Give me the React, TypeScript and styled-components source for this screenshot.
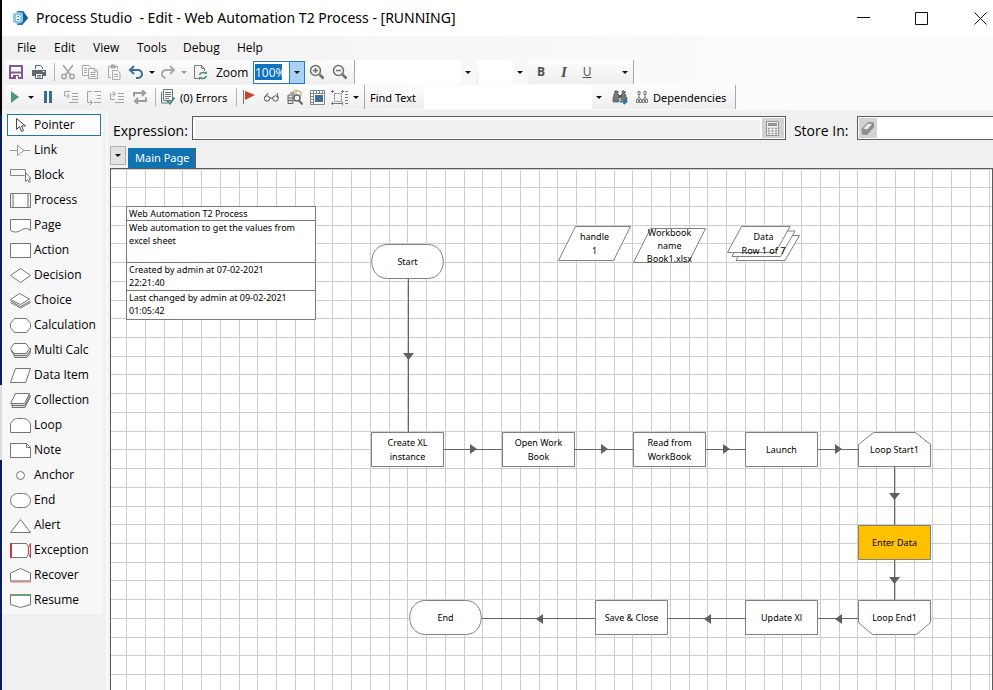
import React from "react";
import styled, { createGlobalStyle } from "styled-components";

const GlobalStyle = createGlobalStyle`
  * { box-sizing: border-box; }
  body { margin: 0; background: #f0f0f0; overflow: hidden; }
  body, button, input, select {
    font-family: "Open Sans", "Noto Sans", sans-serif;
    font-size: 12px;
    color: #000;
  }
  button { border: 0; padding: 0; margin: 0; background: none; }
  svg { display: block; flex: none; }
`;

const INK = "#6a6a6a";

/* ---------- frame ---------- */

const Screen = styled.div`
  display: flex;
  height: 100vh;
`;

const DesktopEdge = styled.div`
  flex: none;
  width: 2px;
  background: linear-gradient(
    #05060c 0 115px,
    #0b1c5c 115px 385px,
    #dcdcdc 385px 460px,
    #0b1c5c 460px
  );
`;

const Window = styled.div`
  flex: 1;
  min-width: 0;
  display: flex;
  flex-direction: column;
  background: #f0f0f0;
`;

const TitleBar = styled.header`
  display: flex;
  align-items: center;
  height: 36px;
  flex: none;
  padding-left: 10px;
  background: #fff;
`;

const Title = styled.h1`
  flex: 1;
  margin: 0;
  padding-left: 7px;
  font-family: "Noto Sans", sans-serif;
  font-size: 14px;
  font-weight: 400;
  line-height: 20px;
  white-space: pre;
`;

const WindowButton = styled.button`
  display: grid;
  place-items: center;
  width: 58px;
  height: 36px;

  &:last-child { width: 60px; margin-right: -17px; }
`;

const Chrome = styled.div`
  flex: none;
  height: 74px;
  background: linear-gradient(90deg, #f0f0f0, #fcfcfc 80%);
`;

const MenuBar = styled.nav`
  display: flex;
  height: 24px;
  align-items: center;
  padding-left: 5px;
`;

const MenuItem = styled.button<{ $w: number }>`
  width: ${(p) => p.$w}px;
  text-align: left;
  padding-left: 10px;
  line-height: 20px;
`;

const ToolRow = styled.div`
  display: flex;
  height: 25px;
  padding-left: 3px;
`;

const ToolGroup = styled.div`
  display: flex;
  height: 24px;
  align-items: center;
  border-right: 1px solid #a8a8a8;
  background: linear-gradient(#fdfdfd, #eeeeee);
`;

const ToolButton = styled.button<{ $w: number }>`
  display: grid;
  place-items: center;
  width: ${(p) => p.$w}px;
  height: 24px;
`;

const WideTool = styled.button<{ $w: number }>`
  display: flex;
  align-items: center;
  gap: 5px;
  width: ${(p) => p.$w}px;
  height: 24px;
  font-family: "Noto Sans", sans-serif;
  font-size: 11px;
  white-space: nowrap;
`;

const Divider = styled.span<{ $w: number }>`
  display: grid;
  place-items: center;
  width: ${(p) => p.$w}px;

  &::before { content: ""; width: 1px; height: 18px; background: #b4b4b4; }
`;

const Gap = styled.span<{ $w: number }>`
  width: ${(p) => p.$w}px;
`;

const ToolLabel = styled.label<{ $w: number; $small?: boolean }>`
  width: ${(p) => p.$w}px;
  padding-left: 5px;
  font-family: ${(p) => (p.$small ? '"Noto Sans"' : '"Open Sans"')}, sans-serif;
  font-size: ${(p) => (p.$small ? 11 : 12)}px;
  white-space: nowrap;
`;

const ZoomCombo = styled.div`
  display: flex;
  align-items: center;
  width: 52px;
  height: 23px;
  border: 1px solid #2a7ab8;
  background: #fff;
`;

const ZoomInput = styled.input`
  width: 27px;
  height: 16px;
  margin: 0 7px 0 1px;
  padding: 0;
  border: 0;
  background: #1173c4;
  color: #fff;
`;

const ZoomDrop = styled.button`
  display: grid;
  place-items: center;
  width: 15px;
  height: 21px;
  border-left: 1px solid #2a7ab8;
  background: #a9d1f5;
`;

const SelectBox = styled.div<{ $w: number }>`
  display: grid;
  grid-template-columns: 1fr 16px;
  align-items: center;
  width: ${(p) => p.$w}px;
  height: 24px;
  background: #fff;

  select {
    grid-area: 1 / 1 / 2 / 3;
    width: 100%;
    height: 24px;
    border: 0;
    appearance: none;
    background: linear-gradient(90deg, #fff calc(100% - 15px), #f8f8f8 0);
  }
  svg { grid-area: 1 / 2; justify-self: center; pointer-events: none; }
`;

const FindInput = styled.input`
  width: 168px;
  height: 24px;
  border: 0;
  padding: 0 4px;
  background: #fff;
`;

const Letter = styled.span<{ $kind: "b" | "i" | "u" }>`
  font-family: ${(p) => (p.$kind === "i" ? '"Liberation Serif", serif' : '"Open Sans", sans-serif')};
  font-size: ${(p) => (p.$kind === "i" ? 15 : 12)}px;
  font-weight: ${(p) => (p.$kind === "u" ? 400 : 700)};
  font-style: ${(p) => (p.$kind === "i" ? "italic" : "normal")};
  text-decoration: ${(p) => (p.$kind === "u" ? "underline" : "none")};
  line-height: 18px;
  color: #505050;
`;

/* ---------- body ---------- */

const Body = styled.div`
  flex: 1;
  min-height: 0;
  display: flex;
`;

const Sidebar = styled.aside`
  flex: none;
  width: 106px;
  border-right: 2px solid #f8f8f8;
`;

const StageList = styled.div`
  display: flex;
  flex-direction: column;
  gap: 3px;
  width: 101px;
  padding: 4px 2px 3px 5px;
  background: #f7f7f7;
`;

const StageButton = styled.button<{ $active?: boolean }>`
  display: flex;
  align-items: center;
  gap: 3px;
  height: 22px;
  padding-left: 2px;
  line-height: 16px;
  border: 1px solid ${(p) => (p.$active ? "#1c7aa8" : "transparent")};
  background: ${(p) => (p.$active ? "#fdfdfd" : "none")};
  white-space: nowrap;
`;

const Main = styled.main`
  flex: 1;
  min-width: 0;
  display: flex;
  flex-direction: column;
`;

const ExpressionRow = styled.div`
  display: flex;
  align-items: center;
  flex: none;
  height: 36px;
  padding-left: 5px;
`;

const FieldLabel = styled.label<{ $w: number }>`
  flex: none;
  width: ${(p) => p.$w}px;
  padding-top: 5px;
  font-size: 14px;
  line-height: 20px;
  white-space: nowrap;
`;

const Field = styled.div<{ $grow: number; $tint?: boolean }>`
  display: flex;
  flex: ${(p) => p.$grow} 1 0;
  min-width: 0;
  height: 24px;
  padding: 1px;
  border: 1px solid #5c5c5c;
  background: #fff;

  input {
    flex: 1;
    min-width: 0;
    border: 0;
    margin: ${(p) => (p.$tint ? "2px 2px 0 1px" : "0")};
    background: ${(p) => (p.$tint ? "#f0f0f0" : "#fff")};
  }
`;

const ExpressionField = styled(Field)`
  margin-right: 8px;
`;

const StoreField = styled(Field)`
  border-right: 0;
`;

const FieldButton = styled.button<{ $w: number }>`
  display: grid;
  place-items: center;
  width: ${(p) => p.$w}px;
  height: 20px;
  background: #d2d2d2;
`;

const TabRow = styled.div`
  display: flex;
  align-items: flex-end;
  flex: none;
  gap: 2px;
  height: 22px;
  padding-left: 2px;
`;

const TabDrop = styled.button`
  display: grid;
  place-items: center;
  align-self: flex-start;
  width: 16px;
  height: 19px;
  border: 1px solid #b0b0b0;
  background: #e2e2e2;
`;

const Tab = styled.button`
  height: 20px;
  padding: 0 6px 2px 7px;
  border-right: 1px solid #5c5c5c;
  background: #0f72b2;
  font-family: "Noto Sans", sans-serif;
  font-size: 11px;
  color: #fff;
  white-space: nowrap;
`;

const Canvas = styled.div`
  position: relative;
  flex: 1;
  overflow: hidden;
  margin-left: 2px;
  border: 1px solid #5c5c5c;
  border-bottom: 0;
  background: #fff;
`;

const Diagram = styled.svg`
  width: 100%;
  height: 100%;
`;

const NodeBox = styled.div<{ $x: number; $y: number; $tight?: boolean }>`
  position: absolute;
  left: ${(p) => p.$x}px;
  top: ${(p) => p.$y}px;
  display: grid;
  place-items: center;
  width: 73px;
  height: 36px;
  font-family: "Noto Sans", sans-serif;
  font-size: 9px;
  line-height: ${(p) => (p.$tight ? 13 : 14)}px;
  text-align: center;
  white-space: pre;

  > * { grid-area: 1 / 1; }
`;

const InfoBox = styled.section`
  position: absolute;
  left: 15px;
  top: 37px;
  width: 190px;
  border: 1px solid #7a7a7a;
  background: #fff;
  font-family: "Noto Sans", sans-serif;
  font-size: 9px;
  line-height: 13px;
`;

const InfoLine = styled.p<{ $lines: number }>`
  margin: 0;
  padding: 0 10px 0 2px;
  min-height: ${(p) => p.$lines * 14}px;

  &:first-child { min-height: 13px; }
  &:last-child { min-height: 29px; }
  & + & { border-top: 1px solid #7a7a7a; }
`;

/* ---------- icons ---------- */

const Caret = ({ color = "#111" }: { color?: string }) => (
  <svg width="6" height="3" viewBox="0 0 6 3"><path d="M0 0h6L3 3z" fill={color} /></svg>
);

type IconProps = { w?: number; h?: number; color?: string; sw?: number; children: React.ReactNode };
const Icon = ({ w = 16, h = 16, color = INK, sw = 1, children }: IconProps) => (
  <svg width={w} height={h} viewBox={`0 0 ${w} ${h}`} fill="none" stroke={color} strokeWidth={sw}>
    {children}
  </svg>
);

const AppIcon = () => (
  <Icon w={17} h={16} color="none">
    <path d="M5 1h6l5 7-6 7H5z" fill="#1d7dc0" />
    <path d="M11 1l5 7-6 7z" fill="#135f9c" />
    <path d="M1 4l4-2 6 1v9l-6 2-4-2z" fill="#8cc4ea" />
    <path d="M4 5h3.500l1 1.500-1 1.500 1 1.500-1 1.500H4z" fill="#e9f5fc" />
    <path d="M5 6h2v1H5zM5 9h2v1H5z" fill="#3a8fc8" />
  </Icon>
);

const SaveIcon = () => (
  <Icon w={14} h={14} color="#80589a" sw={2}>
    <path d="M1 1h12v12H1z" fill="#fff" />
    <path d="M1 7.500h12" />
    <path d="M4 10h6v4H4z" fill="#80589a" stroke="none" />
    <path d="M7 11h2v3H7z" fill="#fff" stroke="none" />
  </Icon>
);
const PrintIcon = () => (
  <Icon w={14} h={14} color="#5f666b">
    <path d="M3.500 4V.5h5l2 2V4" />
    <path d="M0 5h14v6H0z" fill="#5f666b" stroke="none" />
    <path d="M3.500 8.500h7v5h-7z" fill="#fff" />
    <path d="M5 10.500h4M5 12h4" /><path d="M10.500 6.500h2" stroke="#fff" />
  </Icon>
);
const CutIcon = () => (
  <Icon w={16} color="#a4a4a4" sw={1.5}>
    <path d="M3 1l7.500 10M13 1L5.500 11" />
    <circle cx="4" cy="12.500" r="2.200" /><circle cx="12" cy="12.500" r="2.200" />
  </Icon>
);
const CopyIcon = () => (
  <Icon color="#a9a9a9">
    <path d="M7 11.500H.5V1.500H7L9.500 4" /><path d="M2 4.500h3M2 6.500h3M2 8.500h3" />
    <path d="M6.500 4.500h6L15.500 7v7.500h-9z" fill="#f4f4f4" /><path d="M12 4.500V7h3M8.500 8.500h5M8.500 10.500h5M8.500 12.500h5" />
  </Icon>
);
const PasteIcon = () => (
  <Icon color="#a9a9a9">
    <path d="M5 13.500H2.500v-11h9V5" /><path d="M5 1h4v3H5z" fill="#a9a9a9" />
    <path d="M6.500 6.500h5L14 9v6.500H6.500z" fill="#f4f4f4" /><path d="M8 10.500h4M8 12.500h4" />
  </Icon>
);
const UndoIcon = () => (
  <Icon color="#3c6f9f" sw={2}><path d="M6 2L2 6l4 4M2.500 6h7a4 4 0 0 1 1 8H8" /></Icon>
);
const RedoIcon = () => (
  <Icon color="#a9a9a9" sw={2}><path d="M10 2l4 4-4 4M13.500 6h-7a4 4 0 0 0-1 8" /></Icon>
);
const RefreshDocIcon = () => (
  <Icon color="#7c7c7c">
    <path d="M7 14.500H2.500V1.500h7l3 3V7M9.500 1.500v3h3" />
    <path d="M7.500 11a4 3 0 0 1 6-2M14.500 12a4 3 0 0 1-6 2" stroke="#4f9070" strokeWidth="1.500" />
    <path d="M15 7v3h-3zM7 16v-3h3z" fill="#4f9070" stroke="none" />
  </Icon>
);
const Magnifier = ({ plus }: { plus?: boolean }) => (
  <Icon color="#6e6e6e" sw={1.500}>
    <circle cx="6.500" cy="6.500" r="5" /><path d="M10.500 10.500l4 4" strokeWidth="2.500" />
    <path d={plus ? "M4 6.500h5M6.500 4v5" : "M4 6.500h5"} />
  </Icon>
);

const PlayIcon = () => <Icon w={10} h={12} color="none"><path d="M1 0v12l8-6z" fill="#4f9a78" /></Icon>;
const PauseIcon = () => <Icon w={8} h={12} color="none"><path d="M0 0h3v12H0zM5 0h3v12H5z" fill="#386e9c" /></Icon>;
const StepIcon = ({ kind }: { kind: "in" | "over" | "out" }) => (
  <Icon color="#a2a2a2" w={16} h={15}>
    <path d={kind === "over" ? "M8 1.500h7M11 5.500h4M11 8.500h4M8 12.500h7" : "M9 3.500h6M9 6.500h6M9 9.500h6M6 12.500h9"} />
    {kind === "in" && <path d="M7 1.500H1.500V6H6M4 3.500L6.500 6 4 8.500" />}
    {kind === "over" && <path d="M6 1.500H1.500v11H6M4 10l2.500 2.500L4 15" />}
    {kind === "out" && <path d="M6 9.500H1.500V4H6M4 1l2.500 3L4 6.500" />}
  </Icon>
);
const LoopIcon = () => (
  <Icon w={16} h={14} color="#9c9c9c" sw={2}>
    <path d="M2 6.500V3h11M10 0l3 3-3 3M14 7.500V11H3M6 8l-3 3 3 3" />
  </Icon>
);
const ErrorsIcon = () => (
  <Icon w={15} h={16} color="#68757a">
    <path d="M3.500.5h9v11h-9z" fill="#fff" /><path d="M5 3.500h6M5 5.500h6M5 7.500h6M5 9.500h4" /><path d="M1.500 3v11H8" />
    <path d="M7 11.500l3 3 4.500-6" stroke="#4f8a78" strokeWidth="2" />
  </Icon>
);
const FlagIcon = () => (
  <Icon w={12} h={14} color="none"><path d="M0 0h1v14H0z" fill="#777" /><path d="M2 1l10 4-10 5z" fill="#c8442e" /></Icon>
);
const GlassesIcon = () => (
  <Icon w={17} h={10} color="#555">
    <circle cx="4" cy="6.500" r="2.700" /><circle cx="12.500" cy="6.500" r="2.700" />
    <path d="M6.500 6h3.500M1.300 6L5 1M15.300 6L14 1" />
  </Icon>
);
const AnalyseIcon = () => (
  <Icon color="#666">
    <path d="M1 6h5v8.500H1zM1 9h5M1 11.500h5M3 4h4v2" fill="#ddd" />
    <path d="M5 3l4-2 5 2v4M9 1v4" stroke="#c79a4c" />
    <circle cx="10" cy="9" r="3" fill="#fff" strokeWidth="1.500" /><path d="M12 11.500l3.500 4" strokeWidth="2" />
  </Icon>
);
const GridIcon = () => (
  <Icon w={15} h={15} color="#858585">
    <path d="M.5.5h14v14H.5zM.5 3.500h14M3.500.5v14M6.500.5v3M9.500.5v3M12.500.5v3M.5 6.500h3M.5 9.500h3M.5 12.500h3" fill="#fff" />
    <path d="M5 5h8v7H5z" fill="#3b6fa0" stroke="none" />
  </Icon>
);
const BoundsIcon = () => (
  <Icon w={17} h={15} color="#777">
    <path d="M3.500 3.500h7v8h-7z" strokeDasharray="2 1" />
    <path d="M0 1.500h3M0 13.500h12M10 1.500h3M1.500 0v3M1.500 12v3M11.500 0v3M11.500 12v3" />
    <path d="M14 1.500h3M14 4.500h3M14 7.500h3M14 10.500h3M14 13.500h3" />
  </Icon>
);
const BinocularsIcon = () => (
  <Icon w={16} h={15} color="#555">
    <path d="M3 1h3v3l1 1v7H1V8zM10 1h3v3l2 4v2H9V5l1-1z" fill="#777" strokeDasharray="2 1" />
    <path d="M7 5h2v3H7z" fill="#555" stroke="none" />
    <path d="M8 11.500h6M11.500 9l3 2.500-3 2.500" stroke="#36749f" strokeWidth="2" />
  </Icon>
);
const DependenciesIcon = () => (
  <Icon w={12} h={12} color="#7a7a7a">
    <path d="M2 .5h2v3H2zM8 .5h2v3H8zM.5 8.500h2v3h-2zM3.500 8.500h2v3h-2zM6.500 8.500h2v3h-2zM9.500 8.500h2v3h-2zM3 4v2L1.500 8M3 6l1.500 2M9 4v2L7.500 8M9 6l1.500 2" />
  </Icon>
);
const CalculatorIcon = () => (
  <Icon w={13} h={15} color="#959595">
    <path d="M.5.5h12v14H.5z" fill="#eee" /><path d="M2 2h9v3H2z" fill="#959595" stroke="none" />
    <path d="M2 7.500h9M2 10h9M2 12.500h9" strokeDasharray="2 1.500" strokeWidth="1.500" />
  </Icon>
);
const EraserIcon = () => (
  <Icon w={14} h={15} color="#8c8c8c">
    <path d="M1 8l6-6.500L12.500 2v4L6 13.500 1.500 13z" fill="#8c8c8c" /><path d="M1.500 8L7 2l5 .5L6.500 9z" fill="#e9e9e9" />
  </Icon>
);

const stageShapes: Record<string, React.ReactNode> = {
  Pointer: <path d="M6.500 1.500v11l3-3 2 5 2-1-2-4.500h4z" fill="#fff" stroke="#444" />,
  Link: <path d="M-1 8.500h8M14 8.500h6M7.500 3.500v10l6.500-5z" stroke="#999" />,
  Block: <><path d="M15.500 7V2.500H.5v6h14" stroke="#888" /><path d="M15.500 5.500v9l2-2 1.500 3 1.500-1-1.500-3h2z" fill="#fff" /></>,
  Process: <><path d="M.5 1.500h20v14H.5z" fill="#fff" /><path d="M3 2v13M18 2v13" stroke="#b4b4b4" strokeWidth="2" /></>,
  Page: <path d="M.5 2.500h20v11c-4-3-7-2-10 0s-7 2-10 0z" fill="#fff" />,
  Action: <path d="M.5 1.500h20v14H.5z" fill="#fff" />,
  Decision: <path d="M10.500 1.500l10 7-10 7-10-7z" fill="#fff" />,
  Choice: <><path d="M.5 10.500l10 5.500 10-5.500M.5 9l10 5.500L20.500 9" /><path d="M9.500 1.500l10 5.500-9 5.500L.5 7.500z" fill="#fff" /></>,
  Calculation: <path d="M4.500 1.500h12l4 5v4l-4 5h-12l-4-5v-4z" fill="#fff" />,
  "Multi Calc": <><path d="M1 8l4 7.500h12l3.500-5V6M3 12l2 1.500h12l3.500-5" fill="#ddd" /><path d="M4 1.500h12l3.500 5-3.500 5H4l-3.500-5z" fill="#fff" /></>,
  "Data Item": <path d="M5.500 1.500h15l-5 14H.5z" fill="#fff" />,
  Collection: <><path d="M2 12v3.500h13l5.500-11-1-2M1.500 13.500H15l5-10" fill="#ddd" /><path d="M5.500 1.500h14l-5 10H.5z" fill="#fff" /></>,
  Loop: <path d="M.5 15.500v-9c2-3 4-5 7-5h6c3 0 5 2 7 5v9z" fill="#fff" />,
  Note: <><path d="M.5 1.500h16l4 4v10H.5z" fill="#fff" /><path d="M16.500 1.500v4h4" /></>,
  Anchor: <circle cx="10.500" cy="8.500" r="4" fill="#fff" />,
  End: <rect x=".5" y="1.500" width="20" height="14" rx="7" fill="#fff" />,
  Alert: <path d="M10.500 2.500l10 13H.5z" fill="#fff" />,
  Exception: <><path d="M.5 1.500h16c3 4 3 10 0 14H.5z" fill="#fff" /><path d="M1 1v15" stroke="#cc3c3c" strokeWidth="2" /><path d="M20.500 1.500c-3 4-3 10 0 14v-14" stroke="#cc3c3c" /></>,
  Recover: <><path d="M.5 14V6l10-4.500L20.500 6v8z" fill="#fff" /><path d="M0 14.500h21" stroke="#d08d88" strokeWidth="2" /></>,
  Resume: <><path d="M.5 3v9.500l10 3 10-3V3z" fill="#fff" /><path d="M0 3h21" stroke="#6c9f74" strokeWidth="2" /></>,
};

/* ---------- diagram ---------- */

type Shape = "box" | "pill" | "data" | "stack" | "loopStart" | "loopEnd";
type StageNode = { x: number; y: number; shape: Shape; text: string; active?: boolean };

const nodes: StageNode[] = [
  { x: 260, y: 75, shape: "pill", text: "Start" },
  { x: 447, y: 57, shape: "data", text: "handle\n1" },
  { x: 522, y: 57, shape: "data", text: "Workbook\nname\nBook1.xlsx" },
  { x: 616, y: 57, shape: "stack", text: "Data\nRow 1 of 7" },
  { x: 260, y: 263, shape: "box", text: "Create XL\ninstance" },
  { x: 391, y: 263, shape: "box", text: "Open Work\nBook" },
  { x: 522, y: 263, shape: "box", text: "Read from\nWorkBook" },
  { x: 634, y: 263, shape: "box", text: "Launch" },
  { x: 747, y: 263, shape: "loopStart", text: "Loop Start1" },
  { x: 747, y: 356, shape: "box", text: "Enter Data", active: true },
  { x: 747, y: 431, shape: "loopEnd", text: "Loop End1" },
  { x: 634, y: 431, shape: "box", text: "Update Xl" },
  { x: 484, y: 431, shape: "box", text: "Save & Close" },
  { x: 298, y: 431, shape: "pill", text: "End" },
];

const outlines: Record<Shape, string[]> = {
  box: ["M.5.5h72v34H.5z"],
  pill: ["M16.500.5h40c21 0 21 34 0 34h-40c-21 0-21-34 0-34z"],
  data: ["M17.500.5h55l-17 34H.5z"],
  stack: ["M23 9.500h49.500L58 34.500H9z", "M18.500 5h49.500L53.500 30.500H5z", "M14.500.5H63L48.500 26.500H.5z"],
  loopStart: ["M15.500.5h42l15 12v22H.5v-22z"],
  loopEnd: ["M.5.5h72v22l-14 12h-44l-14-12z"],
};

const links = [
  "M297.500 110v153", "M333 280.500h58", "M464 280.500h58", "M595 280.500h39", "M707 280.500h40",
  "M783.500 298v58", "M783.500 391v40", "M747 449.500h-40", "M634 449.500h-77", "M484 449.500H371",
];
const arrows = [
  "M292 184h11l-5.500 7z", "M359 275v10l7-5z", "M490 275v10l7-5z", "M612 275v10l7-5z", "M724 275v10l7-5z",
  "M778 324h11l-5.500 7z", "M778 408h11l-5.500 7z", "M731 445v10l-7-5z", "M600 445v10l-7-5z", "M432 445v10l-7-5z",
];

const columnLines = [0, 19, 38, 56];
const rowLines = Array.from({ length: 25 }, (_, i) => Math.round((i * 468) / 25));

const DiagramLayer = () => (
  <Diagram aria-hidden="true">
    <defs>
      <pattern id="grid" x="15" y="37" width="75" height="468" patternUnits="userSpaceOnUse">
        {columnLines.map((x) => <rect key={x} x={x} width="1" height="468" fill="#cdcdcd" />)}
        {rowLines.map((y) => <rect key={y} y={y} width="75" height="1" fill="#cdcdcd" />)}
      </pattern>
    </defs>
    <rect width="100%" height="100%" fill="url(#grid)" />
    {links.map((d) => <path key={d} d={d} stroke="#666" fill="none" />)}
    {arrows.map((d) => <path key={d} d={d} fill="#606060" />)}
  </Diagram>
);

const StageView = ({ x, y, shape, text, active }: StageNode) => (
  <NodeBox $x={x} $y={y} $tight={text.split("\n").length > 2}>
    <svg width="73" height="36" viewBox="0 0 73 36">
      {outlines[shape].map((d) => <path key={d} d={d} fill={active ? "#ffc000" : "#fff"} stroke="#808080" />)}
    </svg>
    <span>{text}</span>
  </NodeBox>
);

const menus: [string, number][] = [["File", 37], ["Edit", 39], ["View", 44], ["Tools", 46], ["Debug", 54], ["Help", 46]];

export default function App() {
  return (
    <Screen>
      <GlobalStyle />
      <DesktopEdge />
      <Window>
        <TitleBar>
          <AppIcon />
          <Title>{"Process Studio  - Edit - Web Automation T2 Process - [RUNNING]"}</Title>
          <WindowButton aria-label="Minimize"><Icon w={13} h={13} color="#111"><path d="M0 5.500h13" /></Icon></WindowButton>
          <WindowButton aria-label="Maximize"><Icon w={13} h={13} color="#111"><path d="M.5.5h12v12H.5z" /></Icon></WindowButton>
          <WindowButton aria-label="Close"><Icon w={13} h={13} color="#111"><path d="M.5.5l12 12M12.500.5l-12 12" /></Icon></WindowButton>
        </TitleBar>

        <Chrome>
          <MenuBar>
            {menus.map(([name, w]) => <MenuItem key={name} $w={w}>{name}</MenuItem>)}
          </MenuBar>
          <ToolRow>
            <ToolGroup>
              <ToolButton $w={22} aria-label="Save"><SaveIcon /></ToolButton>
              <ToolButton $w={24} aria-label="Print"><PrintIcon /></ToolButton>
              <Divider $w={7} />
              <ToolButton $w={20} aria-label="Cut"><CutIcon /></ToolButton>
              <ToolButton $w={24} aria-label="Copy"><CopyIcon /></ToolButton>
              <ToolButton $w={23} aria-label="Paste"><PasteIcon /></ToolButton>
              <ToolButton $w={22} aria-label="Undo"><UndoIcon /></ToolButton>
              <ToolButton $w={10} aria-label="Undo history"><Caret /></ToolButton>
              <ToolButton $w={22} aria-label="Redo"><RedoIcon /></ToolButton>
              <ToolButton $w={10} aria-label="Redo history"><Caret color="#999" /></ToolButton>
              <ToolButton $w={22} aria-label="Refresh"><RefreshDocIcon /></ToolButton>
              <ToolLabel $w={42} htmlFor="zoom">Zoom</ToolLabel>
              <ZoomCombo>
                <ZoomInput id="zoom" defaultValue="100%" />
                <ZoomDrop aria-label="Zoom levels"><Caret /></ZoomDrop>
              </ZoomCombo>
              <ToolButton $w={23} aria-label="Zoom in"><Magnifier plus /></ToolButton>
              <ToolButton $w={24} aria-label="Zoom out"><Magnifier /></ToolButton>
              <Gap $w={2} />
            </ToolGroup>
            <ToolGroup>
              <SelectBox $w={121}><select aria-label="Font" /><Caret /></SelectBox>
              <Gap $w={3} />
              <SelectBox $w={49}><select aria-label="Font size" /><Caret /></SelectBox>
              <ToolButton $w={26} aria-label="Bold"><Letter $kind="b">B</Letter></ToolButton>
              <ToolButton $w={20} aria-label="Italic"><Letter $kind="i">I</Letter></ToolButton>
              <ToolButton $w={26} aria-label="Underline"><Letter $kind="u">U</Letter></ToolButton>
              <Gap $w={16} />
              <ToolButton $w={17} aria-label="Font colour"><Caret /></ToolButton>
            </ToolGroup>
          </ToolRow>
          <ToolRow>
            <ToolGroup>
              <ToolButton $w={20} aria-label="Go"><PlayIcon /></ToolButton>
              <ToolButton $w={12} aria-label="Go options"><Caret /></ToolButton>
              <ToolButton $w={22} aria-label="Pause"><PauseIcon /></ToolButton>
              <ToolButton $w={24} aria-label="Step in"><StepIcon kind="in" /></ToolButton>
              <ToolButton $w={22} aria-label="Step over"><StepIcon kind="over" /></ToolButton>
              <ToolButton $w={24} aria-label="Step out"><StepIcon kind="out" /></ToolButton>
              <ToolButton $w={22} aria-label="Restart"><LoopIcon /></ToolButton>
              <Divider $w={9} />
              <WideTool $w={71}><ErrorsIcon />(0) Errors</WideTool>
              <Divider $w={10} />
              <ToolButton $w={16} aria-label="Breakpoint"><FlagIcon /></ToolButton>
              <ToolButton $w={28} aria-label="Watch"><GlassesIcon /></ToolButton>
              <ToolButton $w={19} aria-label="Analyse"><AnalyseIcon /></ToolButton>
              <ToolButton $w={26} aria-label="Grid"><GridIcon /></ToolButton>
              <ToolButton $w={19} aria-label="Snap"><BoundsIcon /></ToolButton>
              <ToolButton $w={13} aria-label="Snap options"><Caret /></ToolButton>
              <Gap $w={2} />
            </ToolGroup>
            <ToolGroup>
              <ToolLabel $w={59} $small htmlFor="find">Find Text</ToolLabel>
              <FindInput id="find" />
              <ToolButton $w={14} aria-label="Recent searches"><Caret /></ToolButton>
              <Gap $w={2} />
              <ToolButton $w={24} aria-label="Find next"><BinocularsIcon /></ToolButton>
              <Gap $w={4} />
              <WideTool $w={99}><DependenciesIcon />Dependencies</WideTool>
            </ToolGroup>
          </ToolRow>
        </Chrome>

        <Body>
          <Sidebar>
            <StageList>
              {Object.entries(stageShapes).map(([name, shape]) => (
                <StageButton key={name} $active={name === "Pointer"}>
                  <Icon w={21} h={17} color="#747474">{shape}</Icon>
                  {name}
                </StageButton>
              ))}
            </StageList>
          </Sidebar>
          <Main>
            <ExpressionRow>
              <FieldLabel $w={79} htmlFor="expression">Expression:</FieldLabel>
              <ExpressionField $grow={594} $tint>
                <input id="expression" />
                <FieldButton $w={22} aria-label="Edit expression"><CalculatorIcon /></FieldButton>
              </ExpressionField>
              <FieldLabel $w={63} htmlFor="store">Store In:</FieldLabel>
              <StoreField $grow={134}>
                <FieldButton $w={18} aria-label="Clear"><EraserIcon /></FieldButton>
                <input id="store" />
              </StoreField>
            </ExpressionRow>
            <TabRow>
              <TabDrop aria-label="Pages"><Caret /></TabDrop>
              <Tab>Main Page</Tab>
            </TabRow>
            <Canvas>
              <DiagramLayer />
              <InfoBox>
                <InfoLine $lines={1}>Web Automation T2 Process</InfoLine>
                <InfoLine $lines={3}>Web automation to get the values from excel sheet</InfoLine>
                <InfoLine $lines={2}>Created by admin at 07-02-2021<br />22:21:40</InfoLine>
                <InfoLine $lines={2}>Last changed by admin at 09-02-2021<br />01:05:42</InfoLine>
              </InfoBox>
              {nodes.map((n) => <StageView key={n.text} {...n} />)}
            </Canvas>
          </Main>
        </Body>
      </Window>
    </Screen>
  );
}
